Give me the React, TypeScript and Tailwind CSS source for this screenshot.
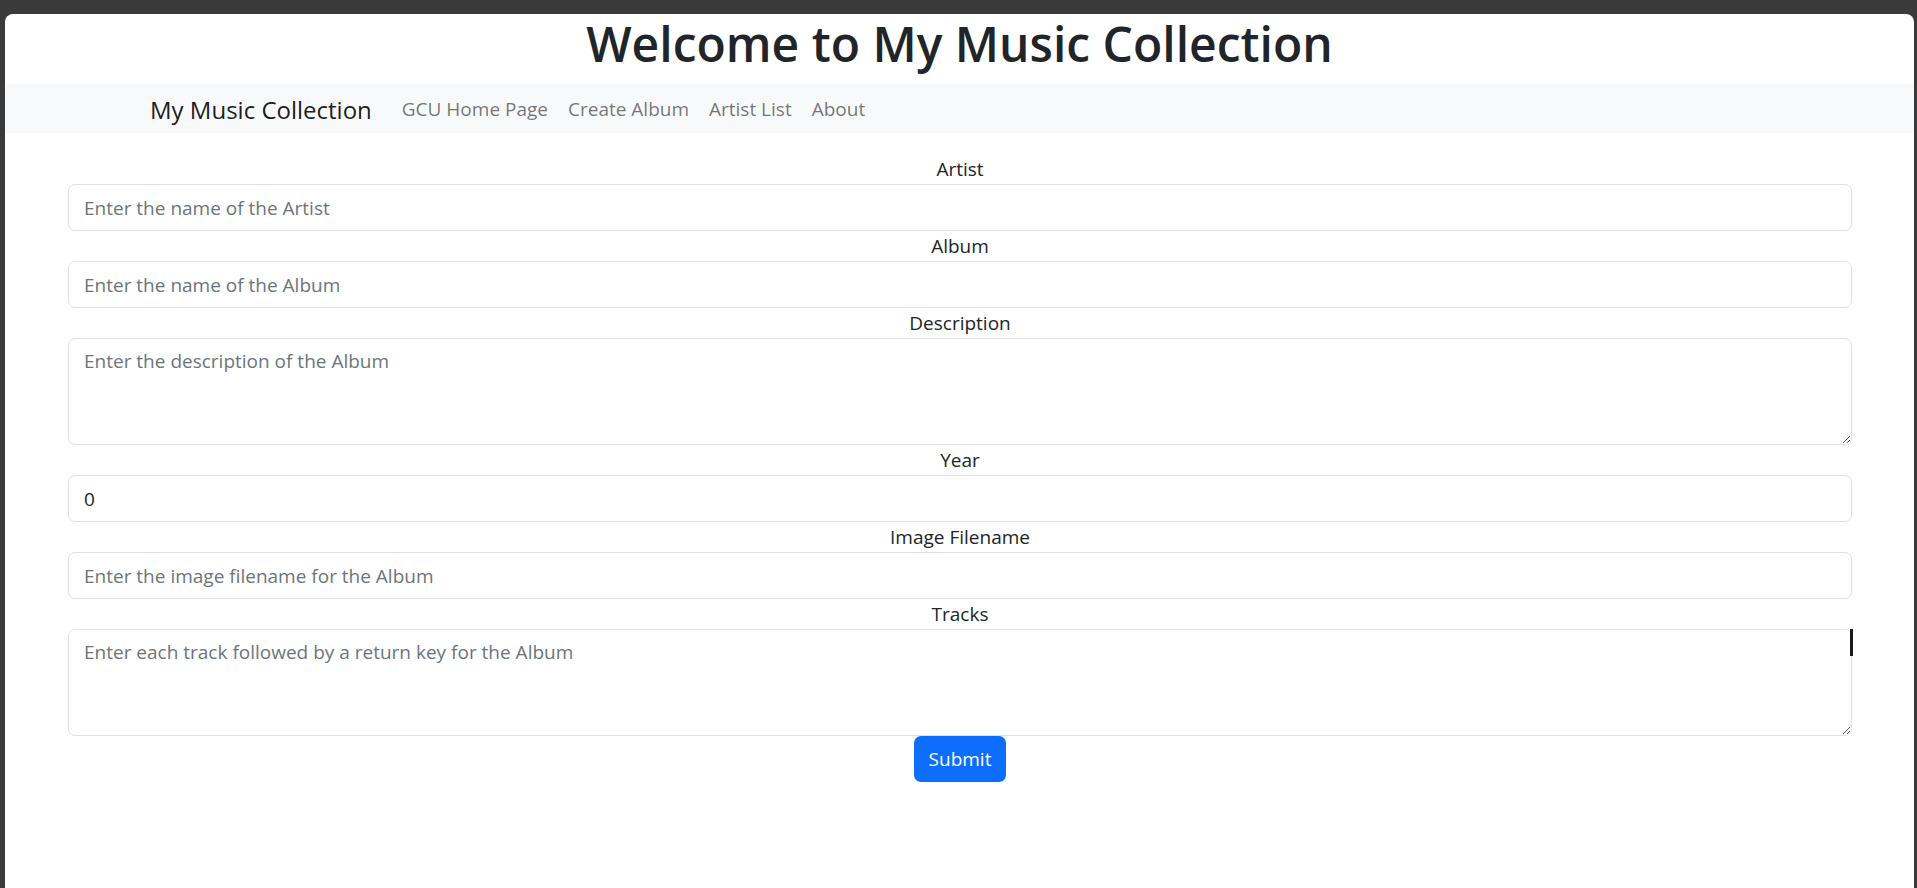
import React from 'react'

const font = { fontFamily: '"Open Sans", "Noto Sans", sans-serif' }

function Label({ children }: { children: React.ReactNode }) {
  return (
    <label className="block text-center text-[19px] leading-[30px] text-[#212529]">
      {children}
    </label>
  )
}

const inputCls =
  'block w-full h-[47px] rounded-[7px] border border-[#dee2e6] bg-white px-[15px] text-[19px] text-[#212529] placeholder:text-[#6c757d] outline-none'

const areaCls =
  'block w-full h-[107px] rounded-[7px] border border-[#dee2e6] bg-white px-[15px] py-[7px] text-[19px] leading-[30px] text-[#212529] placeholder:text-[#6c757d] outline-none'

export default function App() {
  return (
    <div className="min-h-screen bg-[#3a3a3a] pt-[14px] pl-[5px] pr-[3px] flex" style={font}>
      <div className="flex-1 min-h-[874px] bg-white rounded-t-[8px]">
        <h1 className="text-center text-[48px] leading-[60px] font-semibold text-[#212529] mb-[10px]">
          Welcome to My Music Collection
        </h1>

        <nav className="bg-[#f8f9fa] h-[49px] flex items-center">
          <div className="flex items-center pl-[145px] pt-[2px]">
            <a href="#" className="text-[24px] leading-[37px] text-black/90 mr-[20px]">
              My Music Collection
            </a>
            <a href="#" className="px-[10px] text-[19px] text-black/55">GCU Home Page</a>
            <a href="#" className="px-[10px] text-[19px] text-black/55">Create Album</a>
            <a href="#" className="px-[10px] text-[19px] text-black/55">Artist List</a>
            <a href="#" className="px-[10px] text-[19px] text-black/55">About</a>
          </div>
        </nav>

        <form className="mt-[21px] pl-[63px] pr-[62px]" onSubmit={(e) => e.preventDefault()}>
          <Label>Artist</Label>
          <input className={inputCls} placeholder="Enter the name of the Artist" style={font} />
          <Label>Album</Label>
          <input className={inputCls} placeholder="Enter the name of the Album" style={font} />
          <Label>Description</Label>
          <textarea className={areaCls} placeholder="Enter the description of the Album" style={font} />
          <Label>Year</Label>
          <input className={inputCls} defaultValue="0" style={font} />
          <Label>Image Filename</Label>
          <input className={inputCls} placeholder="Enter the image filename for the Album" style={font} />
          <Label>Tracks</Label>
          <div className="relative">
            <textarea
              className={areaCls}
              placeholder="Enter each track followed by a return key for the Album"
              style={font}
            />
            <div className="absolute right-[-1px] top-0 w-[3px] h-[27px] bg-[#1b1b1b]" />
          </div>
          <div className="flex justify-center">
            <button
              type="submit"
              className="h-[46px] px-[15px] rounded-[7px] bg-[#0d6efd] text-white text-[19px]"
              style={font}
            >
              Submit
            </button>
          </div>
        </form>
      </div>
    </div>
  )
}
